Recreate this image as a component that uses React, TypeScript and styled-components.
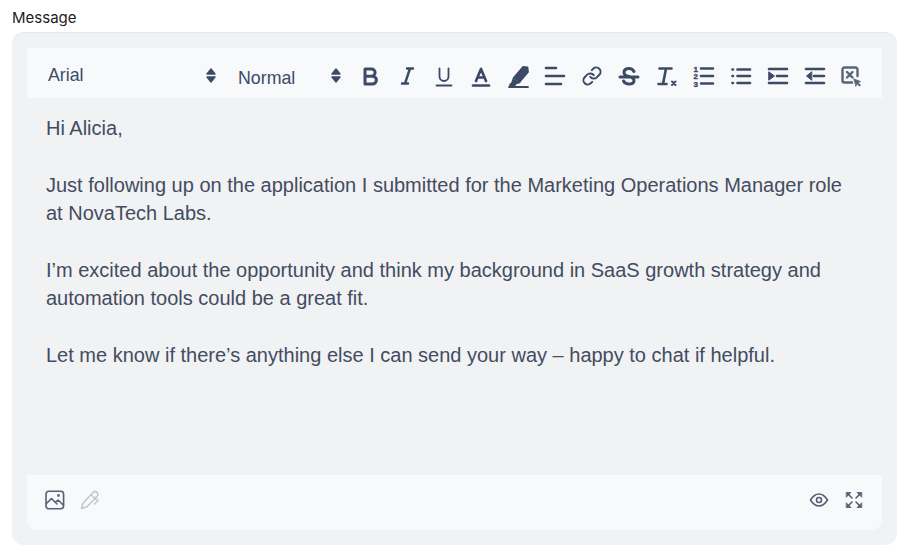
import type { ReactNode } from "react";
import styled, { createGlobalStyle } from "styled-components";

const GlobalStyle = createGlobalStyle`
  html, body {
    margin: 0;
    padding: 0;
    background: #fff;
  }
`;

const Page = styled.div`
  width: 908px;
  height: 556px;
  padding: 9px 11px 0 12px;
  box-sizing: border-box;
  font-family: "Liberation Sans", Arial, sans-serif;
`;

const Label = styled.div`
  font-family: Inter, "Noto Sans", sans-serif;
  font-size: 15px;
  line-height: 18px;
  color: #1f2023;
  margin-bottom: 5px;
`;

const Editor = styled.div`
  height: 513px;
  box-sizing: border-box;
  background: #f1f2f4;
  border-radius: 12px;
  border-top: 1px solid #e6e7ea;
  padding: 15px;
  display: flex;
  flex-direction: column;
`;

const Toolbar = styled.div`
  height: 50px;
  flex: none;
  box-sizing: border-box;
  padding: 5px 0 0 21px;
  background: #f8f9fb;
  display: flex;
  align-items: center;
  color: #3d4a66;
`;

const Pickers = styled.div`
  display: flex;
  gap: 21px;
`;

const FontPicker = styled.div<{ $width: number; $drop: number }>`
  width: ${(p) => p.$width}px;
  flex: none;
  display: flex;
  align-items: center;
  justify-content: space-between;
  font-size: 17.8px;
  padding-right: 1px;
  box-sizing: border-box;
  span {
    position: relative;
    top: ${(p) => p.$drop}px;
  }
`;

const ToolIcons = styled.div`
  display: flex;
  align-items: center;
  gap: 13px;
  margin-left: 16px;
  svg {
    display: block;
  }
`;

const Body = styled.div`
  flex: 1;
  padding: 16px 40px 0 19px;
  font-size: 20px;
  line-height: 28.33px;
  color: #434c60;
  p {
    margin: 0 0 28.33px;
  }
`;

const BottomBar = styled.div`
  height: 55px;
  flex: none;
  box-sizing: border-box;
  background: #f8f9fb;
  border-radius: 0 0 10px 10px;
  display: flex;
  align-items: center;
  justify-content: space-between;
  padding: 0 18px 5px;
`;

const IconGroup = styled.div`
  display: flex;
  align-items: center;
  gap: 15px;
  svg {
    display: block;
  }
`;

const Digit = styled.text`
  font-family: "Liberation Sans", Arial, sans-serif;
  font-size: 8px;
  font-weight: 700;
  fill: #3d4a66;
  stroke: #3d4a66;
  stroke-width: 0.4px;
`;

const Sorter = () => (
  <svg width="10" height="15" viewBox="0 0 10 15" fill="#3d4a66" stroke="#3d4a66" strokeLinejoin="round">
    <path d="M5 1 9 6H1zM1 9h8l-4 5z" strokeWidth="1.4" />
  </svg>
);

const Tool = ({ children, width = 2 }: { children: ReactNode; width?: number }) => (
  <svg
    width="24"
    height="24"
    viewBox="0 0 24 24"
    fill="none"
    stroke="#3d4a66"
    strokeWidth={width}
    strokeLinecap="round"
    strokeLinejoin="round"
  >
    {children}
  </svg>
);

const Small = ({ children, color }: { children: ReactNode; color: string }) => (
  <svg
    width="20"
    height="20"
    viewBox="0 0 20 20"
    fill="none"
    stroke={color}
    strokeWidth="1.6"
    strokeLinecap="round"
    strokeLinejoin="round"
  >
    {children}
  </svg>
);

export default function App() {
  return (
    <Page>
      <GlobalStyle />
      <Label>Message</Label>
      <Editor>
        <Toolbar>
          <Pickers>
            <FontPicker $width={169} $drop={0}>
              <span>Arial</span>
              <Sorter />
            </FontPicker>
            <FontPicker $width={104} $drop={3}>
              <span>Normal</span>
              <Sorter />
            </FontPicker>
          </Pickers>
          <ToolIcons>
            {/* bold */}
            <Tool width={3}>
              <path d="M7 5h6.5a3.6 3.6 0 0 1 0 7.2H7zM7 12.2h7.5a3.9 3.9 0 0 1 0 7.8H7z" />
            </Tool>
            {/* italic */}
            <Tool width={2.4}>
              <path d="M12 4.5h6M7 19.5h6M15 4.5l-5 15" />
            </Tool>
            {/* underline */}
            <Tool width={1.8}>
              <path d="M7.5 4.5v8a4.5 4.5 0 0 0 9 0v-8M4.5 21.5h15" />
            </Tool>
            {/* text colour */}
            <Tool width={2.7}>
              <path d="M7 17 12 5l5 12M8.6 13.5h6.8M4 21.5h16" />
            </Tool>
            {/* highlight */}
            <Tool width={1.8}>
              <path d="M17 3 21.500 3.500 22 8 13.500 18 8 13.500z" fill="#3d4a66" />
              <path d="M7.500 14.500 6 19l-2 2 4.500.5 1.500-2 3.500-1" fill="#3d4a66" />
              <path d="M3 23h19" />
            </Tool>
            {/* align */}
            <Tool width={2.6}>
              <path d="M3 4h10M3 12h18M3 20h15" />
            </Tool>
            {/* link */}
            <Tool width={2.3}>
              <g transform="translate(12 12) scale(.86) translate(-12 -12)">
                <path d="M10 13a5 5 0 0 0 7.54.54l3-3a5 5 0 0 0-7.07-7.07l-1.72 1.71" />
                <path d="M14 11a5 5 0 0 0-7.54-.54l-3 3a5 5 0 0 0 7.07 7.07l1.71-1.71" />
              </g>
            </Tool>
            {/* strike */}
            <Tool width={3}>
              <path d="M17 7.5C16 5.5 14 4.5 12 4.5c-3 0-5 1.5-5 4 0 3 3 3.500 5 4 3 .8 5 1.500 5 4 0 2.300-2.300 3.500-5 3.500-2.500 0-4.500-1-5.500-3M3 13h18" />
            </Tool>
            {/* clear format */}
            <Tool width={2.6}>
              <path d="M5.5 4.5h12M12 4.5 9 20M4.5 20h8" />
              <path d="M18 17.500l3.500 3.500M21.500 17.500 18 21" strokeWidth="2" />
            </Tool>
            {/* ordered list */}
            <Tool width={2.6}>
              <path d="M10 4.5h12M10 12h12M10 19.5h12" />
              <Digit x="2.4" y="7.5">1</Digit>
              <Digit x="2.4" y="15">2</Digit>
              <Digit x="2.4" y="22.5">3</Digit>
            </Tool>
            {/* bullet list */}
            <Tool width={2.6}>
              <path d="M9.5 5.5H22M9.5 12H22M9.5 19H22M4.5 5.5h.5M4.5 12h.5M4.5 19h.5" />
            </Tool>
            {/* indent */}
            <Tool width={2.6}>
              <path d="M4 5h18M12 12h10M4 19h18" />
              <path d="M4 8 9.5 12 4 16z" fill="#3d4a66" strokeWidth="1" />
            </Tool>
            {/* outdent */}
            <Tool width={2.6}>
              <path d="M4 5h18M12 12h10M4 19h18" />
              <path d="M9.5 8 4.5 12l5 4z" fill="#3d4a66" strokeWidth="1" />
            </Tool>
            {/* clean */}
            <Tool width={2.4}>
              <path d="M18.5 12V5.5a2 2 0 0 0-2-2h-11a2 2 0 0 0-2 2v11a2 2 0 0 0 2 2H13" stroke="#5a6478" />
              <path d="M8 8l5.5 5.5M13.5 8 8 13.5" stroke="#5a6478" />
              <path d="M15 15l6.5 2.500-2.500 1.200 2.500 2.500-1 1-2.500-2.500-1 2.300z" fill="#5a6478" stroke="#5a6478" strokeWidth="0.8" />
            </Tool>
          </ToolIcons>
        </Toolbar>
        <Body>
          <p>Hi Alicia,</p>
          <p>
            Just following up on the application I submitted for the Marketing Operations Manager role
            at NovaTech Labs.
          </p>
          <p>
            I’m excited about the opportunity and think my background in SaaS growth strategy and
            automation tools could be a great fit.
          </p>
          <p>Let me know if there’s anything else I can send your way – happy to chat if helpful.</p>
        </Body>
        <BottomBar>
          <IconGroup>
            <Small color="#566074">
              <rect x="1" y="1.2" width="17.6" height="17.6" rx="3" />
              <path d="M1.5 13.5 6.5 8.5l5.500 5.500M10.500 12.500l2.500-2.500 5.300 5" />
              <circle cx="13.5" cy="5.5" r="0.6" />
            </Small>
            <Small color="#c4c7cd">
              <path d="M1.5 18.500l1.300-5L13 2.500a2.800 2.800 0 0 1 4.200 3.800L7 16.800z" />
              <path d="M11 4.500l5 5M14.500 7.500l3.500 3-3.500 3.500" />
            </Small>
          </IconGroup>
          <IconGroup>
            <Small color="#566074">
              <path d="M1.5 10C4 6 7 4 10 4s6 2 8.500 6c-2.500 4-5.500 6-8.500 6s-6-2-8.500-6z" />
              <circle cx="10" cy="10" r="2.5" />
            </Small>
            <Small color="#566074">
              <path d="M3.500 3.500l4.500 4.500M16.500 3.500 12 8M3.500 16.500 8 12M16.500 16.500 12 12" />
              <path d="M2.500 2.500h4.500l-4.500 4.500zM17.500 2.500H13l4.500 4.500zM2.500 17.500H7l-4.500-4.500zM17.500 17.500H13l4.500-4.500z" fill="#566074" strokeWidth="0.8" />
            </Small>
          </IconGroup>
        </BottomBar>
      </Editor>
    </Page>
  );
}
